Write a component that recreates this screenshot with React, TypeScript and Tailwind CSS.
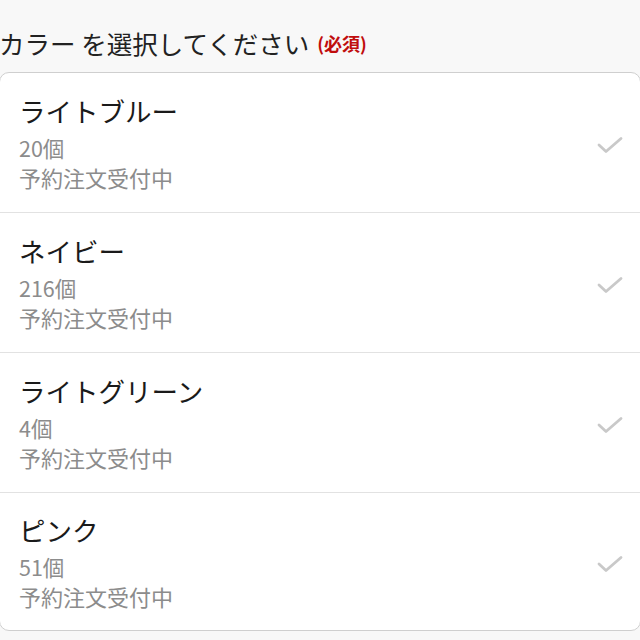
const colors = [
  { name: 'ライトブルー', count: '20個' },
  { name: 'ネイビー', count: '216個' },
  { name: 'ライトグリーン', count: '4個' },
  { name: 'ピンク', count: '51個' },
]

function CheckIcon() {
  return (
    <svg width="26" height="18" viewBox="0 0 26 18" fill="none">
      <polyline points="2,9 9,15.5 24,2.5" stroke="#c9c9c9" strokeWidth="2.8" strokeLinecap="round" strokeLinejoin="round" />
    </svg>
  )
}

export default function App() {
  return (
    <div
      className="w-[640px] h-[640px] overflow-hidden bg-[#f8f8f8]"
      style={{ fontFamily: '"Noto Sans CJK JP", "Noto Sans", sans-serif' }}
    >
      {/* heading */}
      <div className="pt-[27px] mb-[13px] h-[59px] flex items-center whitespace-nowrap">
        <span className="text-[25.5px] leading-[32px] text-[#222] -ml-[1px]">カラー を選択してください</span>
        <span className="ml-[8px] text-[18px] leading-[32px] font-bold text-[#c00d0d]">(必須)</span>
      </div>

      {/* options */}
      <div className="bg-white border border-[#cfcfcf] rounded-[10px] -mx-[1px]">
        {colors.map((c, i) => (
          <div
            key={c.name}
            className={`flex items-center justify-between pl-[19px] pr-[17px] ${
              i < colors.length - 1 ? 'h-[140px] border-b-[1.5px] border-[#e2e2e2]' : 'h-[137px]'
            }`}
          >
            <div className="flex flex-col pt-[1px]">
              <span className="text-[26.5px] leading-[32px] text-[#1a1a1a]">{c.name}</span>
              <span className="mt-[6px] text-[21.5px] leading-[30px] text-[#8c8c8c]">{c.count}</span>
              <span className="text-[22px] leading-[28px] text-[#8c8c8c]">予約注文受付中</span>
            </div>
            <div className="pt-[4px]">
              <CheckIcon />
            </div>
          </div>
        ))}
      </div>
    </div>
  )
}
